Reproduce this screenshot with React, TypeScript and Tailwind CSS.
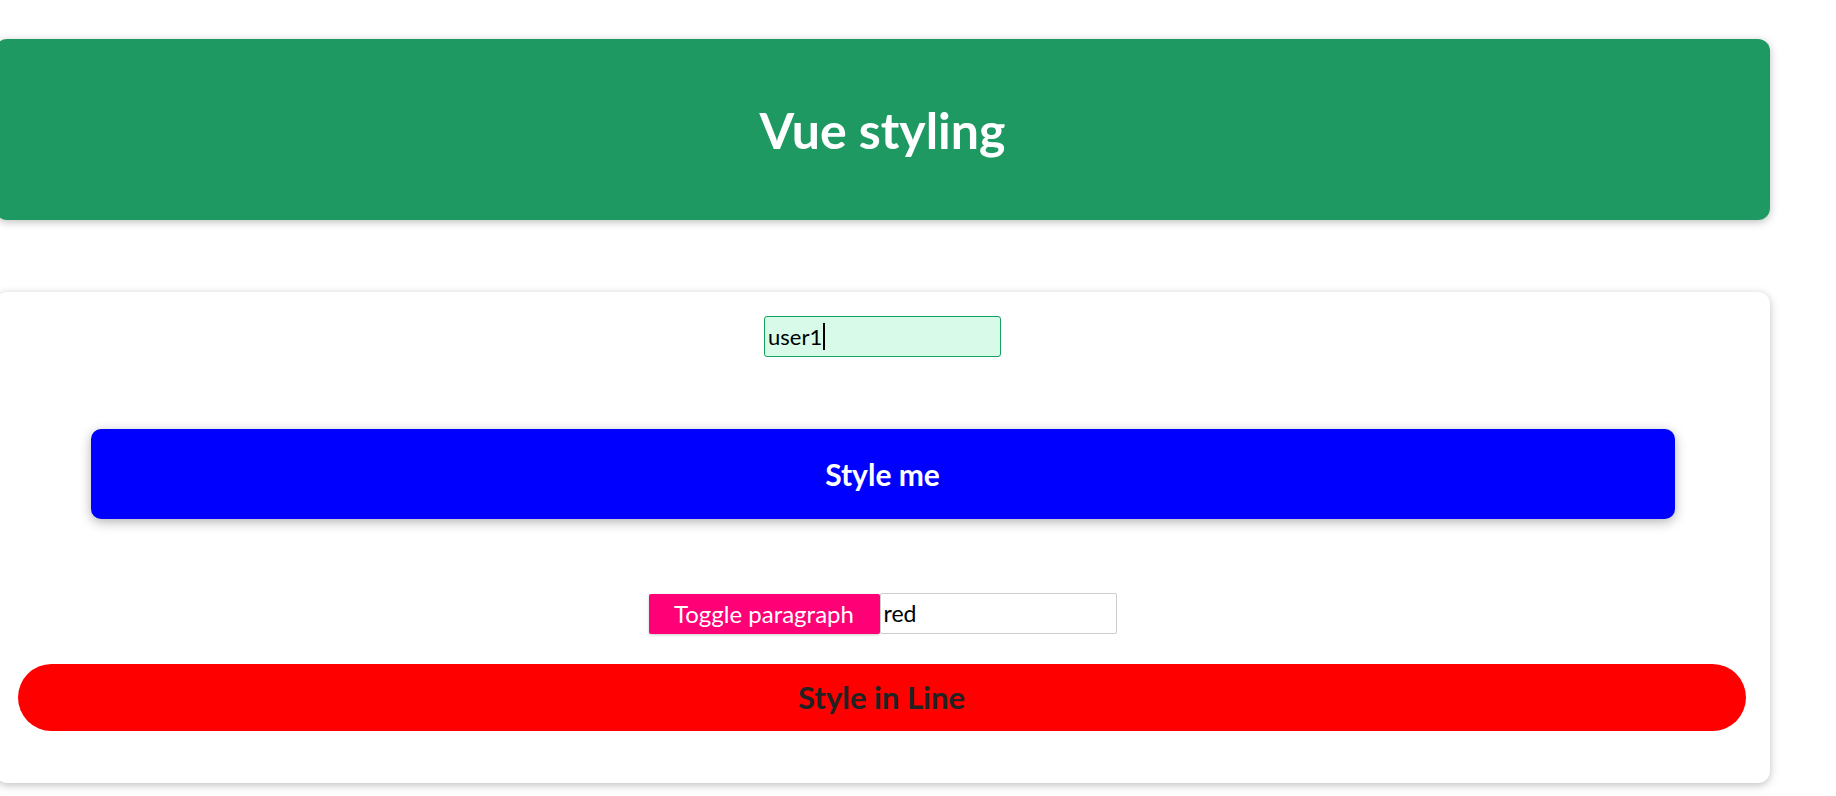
import React from "react";

export default function App() {
  return (
    <div className="min-h-[796px] w-full bg-white overflow-hidden font-['Lato',sans-serif]">
      <div className="ml-[-5px] w-[1775px] pt-[39px]">
        <header className="h-[181px] rounded-[12px] bg-[#1e9962] shadow-[0_2px_8px_rgba(0,0,0,0.26)] flex items-center justify-center">
          <h1 className="text-white font-bold text-[50px] leading-none">Vue styling</h1>
        </header>
        <section className="mt-[72px] h-[491px] rounded-[12px] bg-white shadow-[0_2px_8px_rgba(0,0,0,0.26)] flex flex-col items-center pt-[24px]">
          <div className="h-[41px] w-[237px] rounded-[3px] border border-[#15a060] bg-[#d7fbe8] flex items-center pl-[3px] text-[22px] text-black">
            <span>user1</span>
            <span className="ml-[1px] h-[27px] w-[2px] bg-black" />
          </div>
          <button className="mt-[72px] h-[90px] w-[1584px] rounded-[10px] bg-[#0000ff] text-white font-bold text-[30px] shadow-[0_3px_12px_rgba(0,0,0,0.3)]">
            Style me
          </button>
          <div className="mt-[74px] flex items-center">
            <button className="h-[40px] w-[231px] rounded-[2px] bg-[#ff0077] text-white text-[24px] shadow-[0_1px_3px_rgba(0,0,0,0.2)]">
              Toggle paragraph
            </button>
            <div className="h-[41px] w-[237px] rounded-[2px] border border-[#cccccc] bg-white flex items-center pl-[3px] text-[23px] text-black">
              red
            </div>
          </div>
          <div className="mt-[30px] h-[67px] w-[1728px] ml-[-2px] rounded-full bg-[#ff0000] flex items-center justify-center text-[#222222] font-bold text-[31px]">
            Style in Line
          </div>
        </section>
      </div>
    </div>
  );
}
